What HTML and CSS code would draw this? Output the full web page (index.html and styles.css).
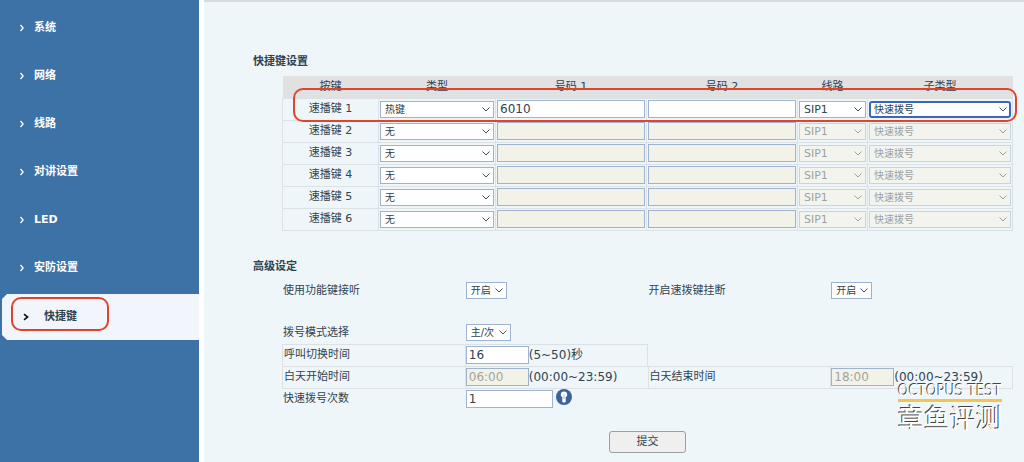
FILE: index.html
```html
<!DOCTYPE html>
<html lang="zh-CN">
<head>
<meta charset="utf-8">
<title>快捷键设置</title>
<link rel="stylesheet" href="styles.css">
</head>
<body>
<nav class="sidebar">
  <a class="item" href="#"><svg class="arrow" viewBox="0 0 6 8"><path d="M1.5 1l2.6 3-2.6 3"/></svg>系统</a>
  <a class="item" href="#"><svg class="arrow" viewBox="0 0 6 8"><path d="M1.5 1l2.6 3-2.6 3"/></svg>网络</a>
  <a class="item" href="#"><svg class="arrow" viewBox="0 0 6 8"><path d="M1.5 1l2.6 3-2.6 3"/></svg>线路</a>
  <a class="item" href="#"><svg class="arrow" viewBox="0 0 6 8"><path d="M1.5 1l2.6 3-2.6 3"/></svg>对讲设置</a>
  <a class="item" href="#"><svg class="arrow" viewBox="0 0 6 8"><path d="M1.5 1l2.6 3-2.6 3"/></svg>LED</a>
  <a class="item" href="#"><svg class="arrow" viewBox="0 0 6 8"><path d="M1.5 1l2.6 3-2.6 3"/></svg>安防设置</a>
  <a class="item active" href="#" aria-current="page"><svg class="arrow" viewBox="0 0 6 8"><path d="M1 1.2l3.6 2.8L1 6.8"/></svg>快捷键</a>
</nav>
<main class="main">
  <form class="form">
    <h2 class="title">快捷键设置</h2>
    <div class="block keys-wrap">
      <table class="keys">
        <colgroup><col class="c-key"><col class="c-type"><col class="c-num"><col class="c-num"><col class="c-line"><col class="c-sub"></colgroup>
        <thead>
          <tr><th>按键</th><th>类型</th><th>号码 1</th><th>号码 2</th><th>线路</th><th>子类型</th></tr>
        </thead>
        <tbody>
          <tr><td>速播键 1</td><td><select aria-label="类型 1"><option>热键</option></select></td><td><input type="text" aria-label="号码 1" value="6010"></td><td><input type="text" aria-label="号码 2"></td><td><select class="latin" aria-label="线路 1"><option>SIP1</option></select></td><td><select class="focused" aria-label="子类型 1"><option>快速拨号</option></select></td></tr>
          <tr><td>速播键 2</td><td><select aria-label="类型 2"><option>无</option></select></td><td><input type="text" aria-label="号码 1" disabled></td><td><input type="text" aria-label="号码 2" disabled></td><td><select class="latin" aria-label="线路 2" disabled><option>SIP1</option></select></td><td><select aria-label="子类型 2" disabled><option>快速拨号</option></select></td></tr>
          <tr><td>速播键 3</td><td><select aria-label="类型 3"><option>无</option></select></td><td><input type="text" aria-label="号码 1" disabled></td><td><input type="text" aria-label="号码 2" disabled></td><td><select class="latin" aria-label="线路 3" disabled><option>SIP1</option></select></td><td><select aria-label="子类型 3" disabled><option>快速拨号</option></select></td></tr>
          <tr><td>速播键 4</td><td><select aria-label="类型 4"><option>无</option></select></td><td><input type="text" aria-label="号码 1" disabled></td><td><input type="text" aria-label="号码 2" disabled></td><td><select class="latin" aria-label="线路 4" disabled><option>SIP1</option></select></td><td><select aria-label="子类型 4" disabled><option>快速拨号</option></select></td></tr>
          <tr><td>速播键 5</td><td><select aria-label="类型 5"><option>无</option></select></td><td><input type="text" aria-label="号码 1" disabled></td><td><input type="text" aria-label="号码 2" disabled></td><td><select class="latin" aria-label="线路 5" disabled><option>SIP1</option></select></td><td><select aria-label="子类型 5" disabled><option>快速拨号</option></select></td></tr>
          <tr><td>速播键 6</td><td><select aria-label="类型 6"><option>无</option></select></td><td><input type="text" aria-label="号码 1" disabled></td><td><input type="text" aria-label="号码 2" disabled></td><td><select class="latin" aria-label="线路 6" disabled><option>SIP1</option></select></td><td><select aria-label="子类型 6" disabled><option>快速拨号</option></select></td></tr>
        </tbody>
      </table>
      <div class="row-mark"></div>
    </div>

    <h2 class="title second">高级设定</h2>
    <div class="block advanced">
      <div class="line spaced">
        <label for="answer">使用功能键接听</label>
        <div class="cell"><select id="answer"><option>开启</option></select></div>
        <label for="hangup">开启速拨键挂断</label>
        <div class="cell"><select id="hangup"><option>开启</option></select></div>
      </div>
      <div class="line">
        <label for="mode">拨号模式选择</label>
        <div class="cell"><select id="mode"><option>主/次</option></select></div>
      </div>
      <div class="line boxed">
        <label for="switch">呼叫切换时间</label>
        <div class="cell"><input class="short" id="switch" type="text" value="16"><span class="hint">(5~50)秒</span></div>
      </div>
      <div class="line boxed last">
        <label for="start">白天开始时间</label>
        <div class="cell"><input class="short" id="start" type="text" value="06:00" disabled><span class="hint">(00:00~23:59)</span></div>
        <label for="end">白天结束时间</label>
        <div class="cell"><input class="short" id="end" type="text" value="18:00" disabled><span class="hint">(00:00~23:59)</span></div>
      </div>
      <div class="line">
        <label for="count">快速拨号次数</label>
        <div class="cell"><input class="medium" id="count" type="text" value="1"><svg class="help" viewBox="0 0 16 16"><circle cx="8" cy="8" r="8" fill="#3c639e"/><path d="M8 2.6a3.2 3.2 0 0 1 3.2 3.200c0 1.200-.6 2-1.500 2.500v4.200c0 .6-.7 1-1.700 1s-1.700-.4-1.700-1V8.300C5.400 7.800 4.800 7 4.800 5.800A3.200 3.200 0 0 1 8 2.600z" fill="#fff"/><path d="M8 5.600v4.600" stroke="#8aa3c9" stroke-width=".8"/></svg></div>
      </div>
    </div>
    <div class="block actions"><button class="submit" type="submit">提交</button></div>
  </form>
  <div class="watermark">
    <div class="mark-latin">OCTOPUS TEST</div>
    <div class="mark-cjk">章鱼评测</div>
  </div>
</main>
</body>
</html>
```

FILE: styles.css
```css
*, *::before, *::after { box-sizing: border-box; }

body {
  margin: 0;
  min-height: 100vh;
  display: flex;
  background: #fff;
  color: #2f4350;
  font: 11px/18px "DejaVu Sans", "Noto Sans CJK SC", sans-serif;
}

.sidebar {
  flex: 0 0 199px;
  display: flex;
  flex-direction: column;
  gap: 4px;
  padding-top: 6px;
  background: #3d72a7;
}

.item {
  display: flex;
  align-items: center;
  height: 44px;
  padding-left: 19px;
  gap: 9px;
  color: #fff;
  font-weight: bold;
  text-decoration: none;
}

.arrow {
  width: 6px;
  height: 8px;
  fill: none;
  stroke: currentColor;
  stroke-width: 1.3;
}

.item.active {
  position: relative;
  margin-left: 2px;
  height: 46px;
  gap: 15px;
  padding-left: 21px;
  background: #f2f6fc;
  color: #2f4350;
  clip-path: polygon(5px 0, 100% 0, 100% 100%, 5px 100%, 0 41px, 0 5px);
}

.active .arrow { stroke: #111; stroke-width: 1.6; }

.item.active::after {
  content: "";
  position: absolute;
  left: 9px;
  top: 3px;
  width: 98px;
  height: 34px;
  border: 2px solid #e0452c;
  border-radius: 10px;
}

.main {
  position: relative;
  flex: 1;
  min-width: 0;
  margin-left: 5px;
  border-top: 2px solid #d5dbdf;
  background: #eff6fa;
}

.form { padding: 51px 11px 10px 49px; }

.title {
  margin: 0 0 5px;
  font-size: 11px;
  line-height: 18px;
}

.title.second { margin: 27px 0 4px; }

.block { margin-left: 29px; }

.keys-wrap { position: relative; }

.keys {
  width: 100%;
  table-layout: fixed;
  border-collapse: collapse;
}

.c-key { width: 96px; }
.c-type { width: 117px; }
.c-line { width: 70px; }
.c-sub { width: 145px; }

.keys th {
  height: 22px;
  padding: 0;
  background: #e1e1e1;
  font-weight: normal;
}

.keys td {
  height: 22px;
  padding: 0 1px;
  border: 1px solid #dbe1e4;
  text-align: center;
  line-height: 16px;
}

.keys input, .keys select { display: block; width: 100%; }

.row-mark {
  position: absolute;
  left: 11px;
  right: -4px;
  top: 12px;
  height: 34px;
  border: 2px solid #e0452c;
  border-radius: 10px;
  pointer-events: none;
}

input, select {
  margin: 0;
  border: 1px solid #9db3cf;
  border-radius: 0;
  background-color: #fff;
  color: #2f4350;
  font-family: inherit;
}

input {
  height: 18px;
  padding: 0 2px;
  font-size: 12px;
}

select {
  appearance: none;
  height: 17px;
  padding: 0 15px 0 4px;
  font-size: 10px;
  line-height: 15px;
  background-image: url("data:image/svg+xml,%3Csvg xmlns='http://www.w3.org/2000/svg' width='8' height='5'%3E%3Cpath d='M.5.5L4 4 7.500.5' fill='none' stroke='%23405058'/%3E%3C/svg%3E");
  background-repeat: no-repeat;
  background-position: right 3px center;
}

select.latin { font-size: 11px; }

select.focused {
  border: 2px solid #3768bd;
  border-radius: 3px;
  padding-left: 3px;
  line-height: 13px;
  background-position: right 2px center;
}

input:disabled { background-color: #f3f2e9; color: #a3a39d; }

select:disabled {
  background-color: #f8f3e2;
  color: #4a4a46;
  opacity: .5;
}

.line {
  display: grid;
  grid-template-columns: repeat(4, 1fr);
  align-items: center;
  height: 22px;
}

.line label { padding-left: 1px; }
.line.spaced { margin-bottom: 20px; }
.line .cell { display: flex; align-items: center; }
.line select { margin-left: 1px; }
.line .medium { margin-left: 1px; }

.boxed > * {
  height: 22px;
  border: 1px solid #dbe1e4;
  border-width: 1px 0 0 1px;
  line-height: 20px;
}

.boxed > :last-child { border-right-width: 1px; }
.boxed.last > * { border-bottom-width: 1px; height: 23px; }
.boxed.last { height: 22px; align-items: start; }

.short { width: 63px; }
.medium { width: 87px; }
.hint { font-size: 12px; }

.help {
  width: 16px;
  height: 16px;
  margin: 0 0 4px 3px;
}

.actions { margin-top: 21px; text-align: center; }

.submit {
  width: 77px;
  height: 22px;
  padding: 0;
  border: 1px solid #9a9fa2;
  border-radius: 3px;
  background: #efefef;
  color: #2f4350;
  font: inherit;
}

.watermark {
  position: absolute;
  right: 22px;
  top: 381px;
  color: #fff;
  text-align: center;
  white-space: nowrap;
  text-shadow: -1px -1px 0 #444;
}

.mark-latin {
  border-bottom: 3px solid #f0c64c;
  font: 15px/16px "Liberation Sans Narrow", "DejaVu Sans Condensed", sans-serif;
}

.mark-cjk { font: 26px/30px "Noto Sans CJK SC", sans-serif; }
```
